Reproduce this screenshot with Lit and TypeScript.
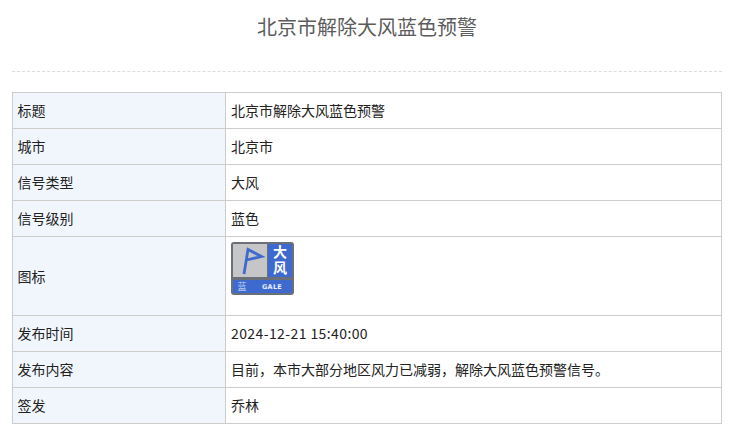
import { LitElement, html, css, svg } from "lit";
import { customElement } from "lit/decorators.js";

const rows: [string, string][] = [
  ["标题", "北京市解除大风蓝色预警"],
  ["城市", "北京市"],
  ["信号类型", "大风"],
  ["信号级别", "蓝色"],
  ["图标", ""],
  ["发布时间", "2024-12-21 15:40:00"],
  ["发布内容", "目前\uFF0C本市大部分地区风力已减弱\uFF0C解除大风蓝色预警信号。"],
  ["签发", "乔林"],
];

const icon = svg`<svg class="icon" viewBox="0 0 63 53" width="63" height="53" role="img" aria-label="大风蓝色预警">
  <rect width="63" height="53" rx="3" fill="#6b6f78"/>
  <rect x="2" y="2" width="34" height="33" fill="#c6c6c8"/>
  <rect x="37" y="2" width="24" height="33" fill="#3e6ad0"/>
  <rect x="2" y="38" width="59" height="13" fill="#3e6ad0"/>
  <path d="M13 32 L17 7.5 L30.5 14.5 L15.6 18" fill="none" stroke="#3e6ad0" stroke-width="2.8" stroke-linejoin="miter"/>
  <text x="49" y="3" class="big" writing-mode="vertical-rl">大风</text>
  <text x="11" y="48" class="lvl">蓝</text>
  <text x="41" y="47" class="gale">GALE</text>
</svg>`;

@customElement("app-root")
export class AppRoot extends LitElement {
  static styles = css`
    :host {
      display: block;
      width: 734px;
      height: 437px;
      background: #fff;
      overflow: hidden;
      font-family: "Noto Sans CJK SC", "Noto Sans", sans-serif;
      color: #222;
    }
    .wrap { padding: 0 12px; }
    h1 {
      margin: 0;
      height: 72px;
      box-sizing: border-box;
      padding-top: 12px;
      font-size: 20px;
      line-height: 30px;
      font-weight: 400;
      color: #5c5c5c;
      text-align: center;
      border-bottom: 1px dashed #ddd;
    }
    table {
      margin-top: 20px;
      width: 710px;
      border-collapse: collapse;
      table-layout: fixed;
      font-size: 14px;
    }
    td {
      border: 1px solid #ccc;
      padding: 0 5px 2px 5px;
      height: 36px;
      box-sizing: border-box;
      line-height: 20px;
    }
    td.k { background: #f1f6fd; width: 213px; padding-left: 4.5px; }
    tr.ic td { height: 79px; }
    tr.ic td.k { padding-bottom: 0; }
    tr.ic td.v { padding: 5px 5px 20px 5px; }
    .date { letter-spacing: 0.4px; }
    .icon { display: block; }
    .big { font-size: 14px; font-weight: 700; fill: #fff; letter-spacing: 2px; font-family: "Noto Sans CJK SC", sans-serif; }
    .lvl { font-size: 9px; fill: #c9d6f3; text-anchor: middle; font-family: "Noto Sans CJK SC", sans-serif; }
    .gale { font-size: 6.5px; font-weight: 700; fill: #e6ecfb; letter-spacing: 0.3px; font-family: "DejaVu Sans", sans-serif; text-anchor: middle; }
  `;

  render() {
    return html`<div class="wrap">
      <h1>北京市解除大风蓝色预警</h1>
      <table>
        <tbody>
          ${rows.map(
            ([k, v]) => html`<tr class=${k === "图标" ? "ic" : ""}>
              <td class="k">${k}</td>
              <td class="v">${k === "图标"
                ? icon
                : k === "发布时间"
                ? html`<span class="date">${v}</span>`
                : v}</td>
            </tr>`
          )}
        </tbody>
      </table>
    </div>`;
  }
}
